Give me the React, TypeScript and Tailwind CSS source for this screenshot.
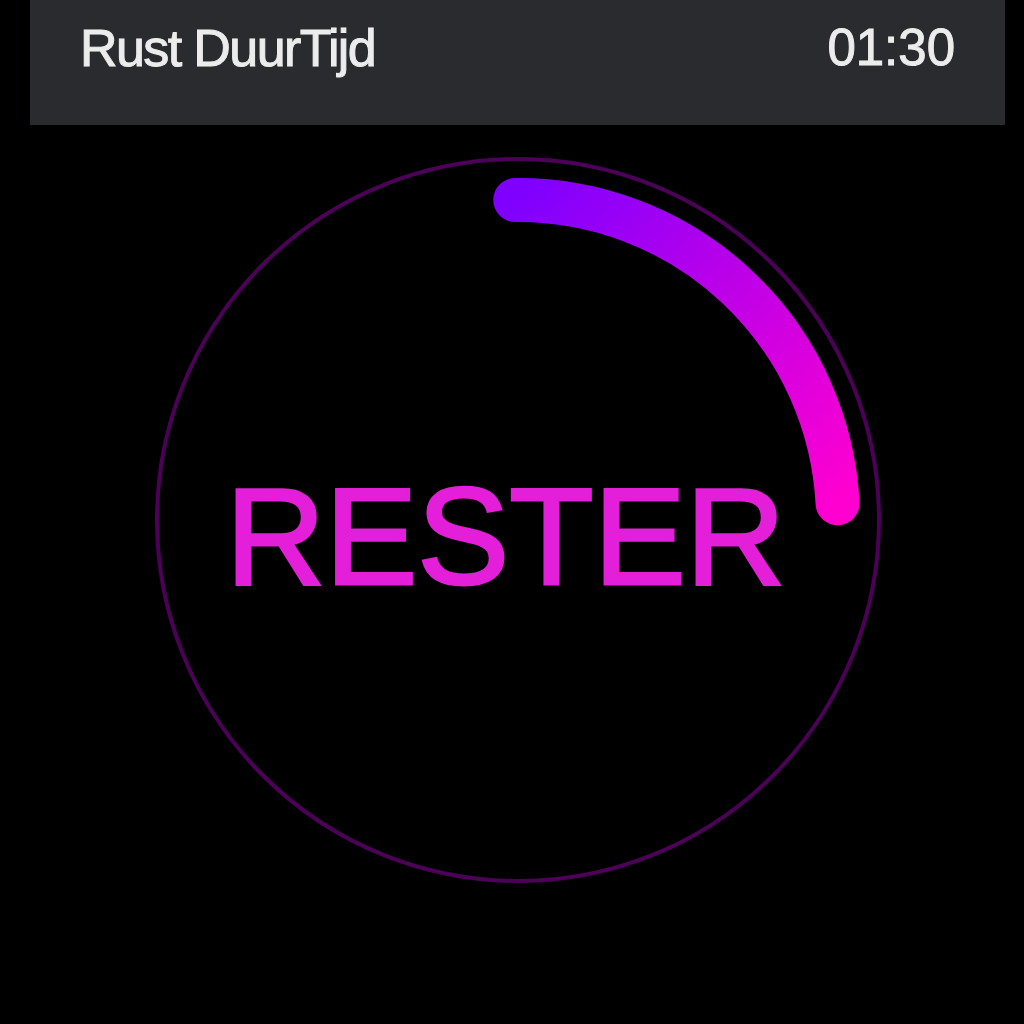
import React from "react";

export default function App() {
  const cx = 365;
  const cy = 365;
  const r = 320;
  const startAngle = -90.5;
  const endAngle = -3;
  const toXY = (a: number) => {
    const rad = (a * Math.PI) / 180;
    return [cx + r * Math.cos(rad), cy + r * Math.sin(rad)];
  };
  const [sx, sy] = toXY(startAngle);
  const [ex, ey] = toXY(endAngle);
  const arcPath = `M ${sx} ${sy} A ${r} ${r} 0 0 1 ${ex} ${ey}`;

  return (
    <div
      className="w-[1024px] h-[1024px] bg-black overflow-hidden"
      style={{ fontFamily: '"Liberation Sans", Arial, sans-serif' }}
    >
      <div className="ml-[30px] w-[975px] flex flex-col items-center">
        <div className="w-full h-[125px] bg-[#2a2b2f] flex justify-between items-start pt-[22px] pl-[50px] pr-[50px]">
          <span className="text-[52px] leading-none text-[#ececec] tracking-[-1.6px] [-webkit-text-stroke:1px_#ececec]">
            Rust DuurTijd
          </span>
          <span className="text-[51px] leading-none text-[#ececec] [-webkit-text-stroke:1px_#ececec]">
            01:30
          </span>
        </div>
        <div className="relative mt-[30px] w-[730px] h-[730px] flex items-center justify-center">
          <svg
            className="absolute inset-0"
            width="730"
            height="730"
            viewBox="0 0 730 730"
          >
            <defs>
              <linearGradient id="arcGrad" x1={sx} y1={sy} x2={ex} y2={ey} gradientUnits="userSpaceOnUse">
                <stop offset="0" stopColor="#7f00ff" />
                <stop offset="1" stopColor="#ff00d0" />
              </linearGradient>
            </defs>
            <circle cx={cx} cy={cy} r={361} fill="none" stroke="#4d0058" strokeWidth="4" />
            <path
              d={arcPath}
              fill="none"
              stroke="url(#arcGrad)"
              strokeWidth="44"
              strokeLinecap="round"
            />
          </svg>
          <span className="relative mt-[32px] mr-[24px] text-[138px] leading-none text-[#e41fd9] [-webkit-text-stroke:3px_#e41fd9]">
            RESTER
          </span>
        </div>
      </div>
    </div>
  );
}
